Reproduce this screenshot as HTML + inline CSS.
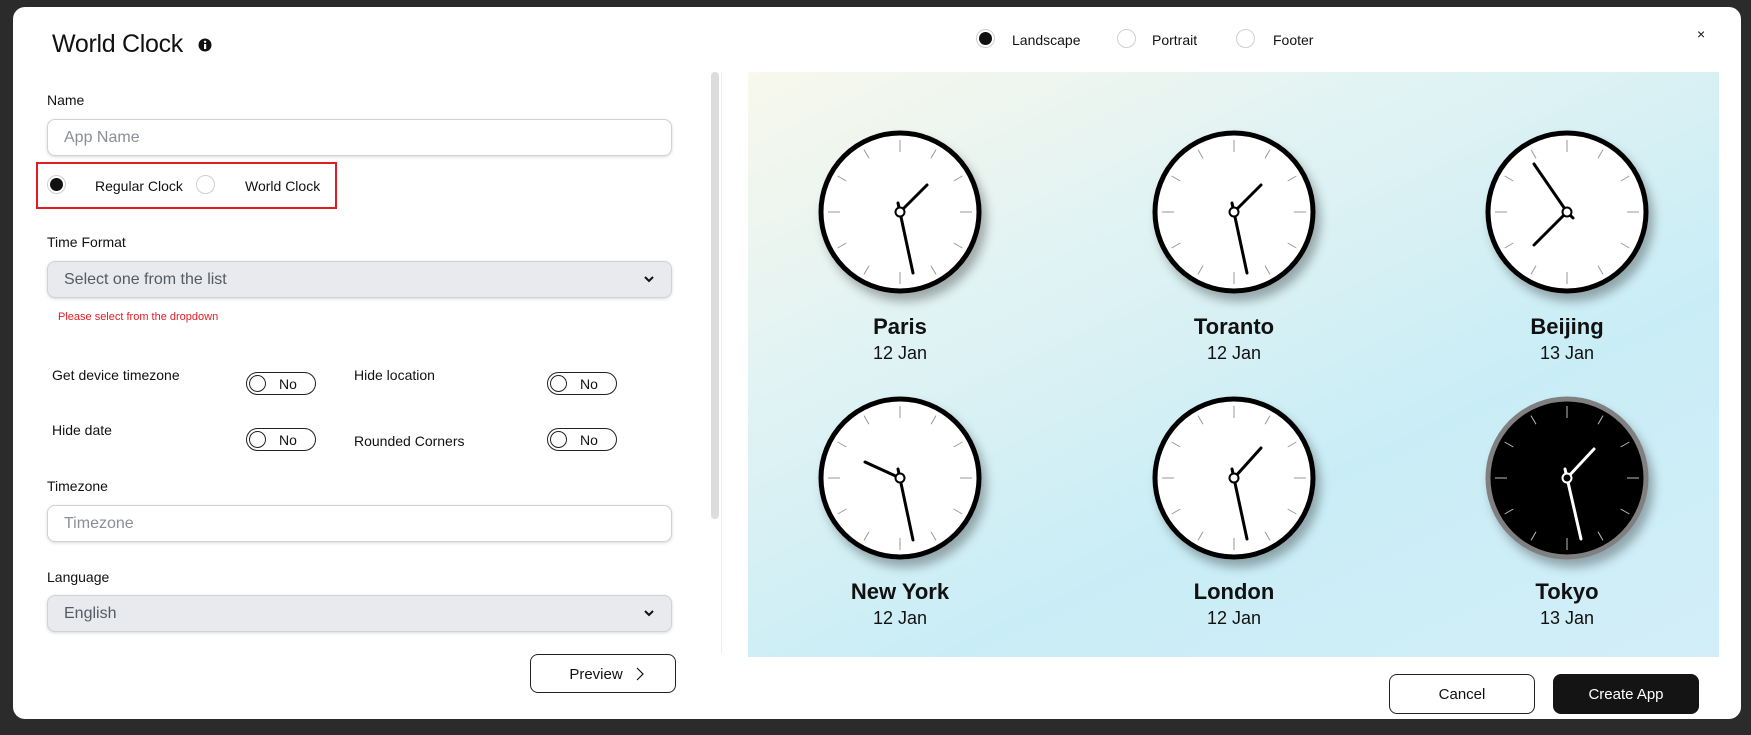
<!DOCTYPE html>
<html><head><meta charset="utf-8">
<style>
*{box-sizing:border-box;margin:0;padding:0}
body{width:1751px;height:735px;background:#2b2b2b;font-family:"Liberation Sans",sans-serif;position:relative;overflow:hidden;color:#111}
.modal{position:absolute;left:13px;top:7px;width:1728px;height:712px;background:#fff;border-radius:12px}
.a{position:absolute}
.lbl{font-size:14px;color:#111}
.inp{position:absolute;left:47px;width:625px;height:37px;border:1px solid #cfd2d6;border-radius:8px;box-shadow:0 1px 3px rgba(0,0,0,.15);font-size:16px;color:#8a8f96;padding:9px 16px;background:#fff}
.sel{background:#e8eaed;color:#555b63}
.chev{position:absolute;right:16px;top:11px}
.rad{position:absolute;width:19px;height:19px;border-radius:50%;border:1px solid #d0d0d0;background:#fff}
.rad.on::after{content:"";position:absolute;left:2px;top:2px;width:13px;height:13px;border-radius:50%;background:#111}
.tog{position:absolute;width:70px;height:23px;border:1.5px solid #222;border-radius:12px;font-size:14px}
.tog::before{content:"";position:absolute;left:2px;top:1.5px;width:17px;height:17px;border:1.5px solid #222;border-radius:50%;box-sizing:border-box}
.tog span{position:absolute;left:32px;top:3px}
.city{position:absolute;width:200px;text-align:center;font-weight:bold;font-size:22px}
.date{position:absolute;width:200px;text-align:center;font-size:18px}
.btn{position:absolute;border:1px solid #222;border-radius:8px;font-size:15px;text-align:center;background:#fff}
.sh{filter:drop-shadow(5px 8px 5px rgba(0,0,0,.3))}
</style></head><body>
<div class="modal"></div>
<div class="a" style="left:52px;top:30px;font-size:25px;font-weight:500;letter-spacing:-0.3px">World Clock</div>
<svg class="a" style="left:198px;top:38px" width="14" height="14" viewBox="0 0 14 14"><circle cx="7" cy="7" r="6.5" fill="#111"/><rect x="6" y="6" width="2.2" height="5" fill="#fff"/><circle cx="7.1" cy="3.8" r="1.2" fill="#fff"/></svg>

<div class="a lbl" style="left:47px;top:92px">Name</div>
<div class="inp" style="top:119px">App Name</div>
<div class="a" style="left:36px;top:162px;width:301px;height:47px;border:2px solid #e31b23"></div>
<div class="rad on" style="left:47px;top:175px"></div>
<div class="a lbl" style="left:95px;top:178px">Regular Clock</div>
<div class="rad" style="left:196px;top:175px"></div>
<div class="a lbl" style="left:245px;top:178px">World Clock</div>

<div class="a lbl" style="left:47px;top:234px">Time Format</div>
<div class="inp sel" style="top:261px">Select one from the list<svg class="chev" width="12" height="12" viewBox="0 0 12 12"><path d="M2 4l4 4 4-4" fill="none" stroke="#111" stroke-width="2"/></svg></div>
<div class="a" style="left:58px;top:311px;font-size:11px;color:#e31b23">Please select from the dropdown</div>

<div class="a lbl" style="left:52px;top:367px">Get device timezone</div>
<div class="tog" style="left:246px;top:372px"><span>No</span></div>
<div class="a lbl" style="left:354px;top:367px">Hide location</div>
<div class="tog" style="left:547px;top:372px"><span>No</span></div>
<div class="a lbl" style="left:52px;top:422px">Hide date</div>
<div class="tog" style="left:246px;top:428px"><span>No</span></div>
<div class="a lbl" style="left:354px;top:433px">Rounded Corners</div>
<div class="tog" style="left:547px;top:428px"><span>No</span></div>

<div class="a lbl" style="left:47px;top:478px">Timezone</div>
<div class="inp" style="top:505px">Timezone</div>
<div class="a lbl" style="left:47px;top:569px">Language</div>
<div class="inp sel" style="top:595px">English<svg class="chev" width="12" height="12" viewBox="0 0 12 12"><path d="M2 4l4 4 4-4" fill="none" stroke="#111" stroke-width="2"/></svg></div>
<div class="btn" style="left:530px;top:654px;width:146px;height:39px;line-height:39px;padding-right:14px">Preview<svg class="a" style="right:30px;top:12px" width="10" height="14" viewBox="0 0 10 14"><path d="M2 1l6 6-6 6" fill="none" stroke="#111" stroke-width="1.2"/></svg></div>

<div class="a" style="left:711px;top:72px;width:8px;height:447px;background:#dcdcdc;border-radius:4px"></div>
<div class="a" style="left:721px;top:72px;width:1px;height:582px;background:#eee"></div>

<div class="rad on" style="left:976px;top:29px"></div>
<div class="a lbl" style="left:1012px;top:32px">Landscape</div>
<div class="rad" style="left:1117px;top:29px"></div>
<div class="a lbl" style="left:1152px;top:32px">Portrait</div>
<div class="rad" style="left:1236px;top:29px"></div>
<div class="a lbl" style="left:1273px;top:32px">Footer</div>
<div class="a" style="left:1697px;top:26px;font-size:14px">×</div>

<div class="a" style="left:748px;top:72px;width:971px;height:585px;background:linear-gradient(155deg,#f8f8ec 0%,#e2f3f3 30%,#c9edf6 65%,#d3eef8 100%)"></div>

<svg width="0" height="0" style="position:absolute">
<defs>
<g id="tk">
<line x1="0" y1="-72" x2="0" y2="-60"/><line x1="0" y1="72" x2="0" y2="60"/><line x1="-72" y1="0" x2="-60" y2="0"/><line x1="72" y1="0" x2="60" y2="0"/>
<g transform="rotate(30)"><line x1="0" y1="-72" x2="0" y2="-62"/><line x1="0" y1="72" x2="0" y2="62"/><line x1="-72" y1="0" x2="-62" y2="0"/><line x1="72" y1="0" x2="62" y2="0"/></g>
<g transform="rotate(60)"><line x1="0" y1="-72" x2="0" y2="-62"/><line x1="0" y1="72" x2="0" y2="62"/><line x1="-72" y1="0" x2="-62" y2="0"/><line x1="72" y1="0" x2="62" y2="0"/></g>
</g>
</defs></svg>

<svg class="a" style="left:805px;top:117px" width="200" height="200" viewBox="-95 -95 200 200"><g class="sh"><circle r="79" fill="#fff" stroke="#000" stroke-width="5"/></g><g stroke="#999" stroke-width="1"><use href="#tk"/></g><g stroke="#000" stroke-width="3" stroke-linecap="round"><line x1="0" y1="0" x2="27" y2="-27"/><line x1="-2" y1="-9" x2="13" y2="61"/></g><circle r="4.5" fill="#fff" stroke="#000" stroke-width="2"/></svg>
<svg class="a" style="left:1139px;top:117px" width="200" height="200" viewBox="-95 -95 200 200"><g class="sh"><circle r="79" fill="#fff" stroke="#000" stroke-width="5"/></g><g stroke="#999" stroke-width="1"><use href="#tk"/></g><g stroke="#000" stroke-width="3" stroke-linecap="round"><line x1="0" y1="0" x2="27" y2="-27"/><line x1="-2" y1="-9" x2="13" y2="61"/></g><circle r="4.5" fill="#fff" stroke="#000" stroke-width="2"/></svg>
<svg class="a" style="left:1472px;top:117px" width="200" height="200" viewBox="-95 -95 200 200"><g class="sh"><circle r="79" fill="#fff" stroke="#000" stroke-width="5"/></g><g stroke="#999" stroke-width="1"><use href="#tk"/></g><g stroke="#000" stroke-width="3" stroke-linecap="round"><line x1="0" y1="0" x2="-33" y2="-48"/><line x1="0" y1="0" x2="-33" y2="33"/><line x1="0" y1="0" x2="6" y2="6"/></g><circle r="4.5" fill="#fff" stroke="#000" stroke-width="2"/></svg>

<svg class="a" style="left:805px;top:383px" width="200" height="200" viewBox="-95 -95 200 200"><g class="sh"><circle r="79" fill="#fff" stroke="#000" stroke-width="5"/></g><g stroke="#999" stroke-width="1"><use href="#tk"/></g><g stroke="#000" stroke-width="3" stroke-linecap="round"><line x1="0" y1="0" x2="-35" y2="-16"/><line x1="-2" y1="-9" x2="13" y2="62"/></g><circle r="4.5" fill="#fff" stroke="#000" stroke-width="2"/></svg>
<svg class="a" style="left:1139px;top:383px" width="200" height="200" viewBox="-95 -95 200 200"><g class="sh"><circle r="79" fill="#fff" stroke="#000" stroke-width="5"/></g><g stroke="#999" stroke-width="1"><use href="#tk"/></g><g stroke="#000" stroke-width="3" stroke-linecap="round"><line x1="0" y1="0" x2="27" y2="-30"/><line x1="-2" y1="-9" x2="13" y2="61"/></g><circle r="4.5" fill="#fff" stroke="#000" stroke-width="2"/></svg>
<svg class="a" style="left:1472px;top:383px" width="200" height="200" viewBox="-95 -95 200 200"><g class="sh"><circle r="79" fill="#000" stroke="#808080" stroke-width="5"/></g><g stroke="#bbb" stroke-width="1"><use href="#tk"/></g><g stroke="#fff" stroke-width="3" stroke-linecap="round"><line x1="0" y1="0" x2="27" y2="-29"/><line x1="-2" y1="-9" x2="14" y2="61"/></g><circle r="4.5" fill="#000" stroke="#fff" stroke-width="2"/></svg>

<div class="city" style="left:800px;top:314px">Paris</div>
<div class="date" style="left:800px;top:343px">12 Jan</div>
<div class="city" style="left:1134px;top:314px">Toranto</div>
<div class="date" style="left:1134px;top:343px">12 Jan</div>
<div class="city" style="left:1467px;top:314px">Beijing</div>
<div class="date" style="left:1467px;top:343px">13 Jan</div>
<div class="city" style="left:800px;top:579px">New York</div>
<div class="date" style="left:800px;top:608px">12 Jan</div>
<div class="city" style="left:1134px;top:579px">London</div>
<div class="date" style="left:1134px;top:608px">12 Jan</div>
<div class="city" style="left:1467px;top:579px">Tokyo</div>
<div class="date" style="left:1467px;top:608px">13 Jan</div>

<div class="btn" style="left:1389px;top:674px;width:146px;height:40px;line-height:40px">Cancel</div>
<div class="btn" style="left:1553px;top:674px;width:146px;height:40px;line-height:40px;background:#141414;color:#fff;border-color:#141414">Create App</div>
</body></html>
